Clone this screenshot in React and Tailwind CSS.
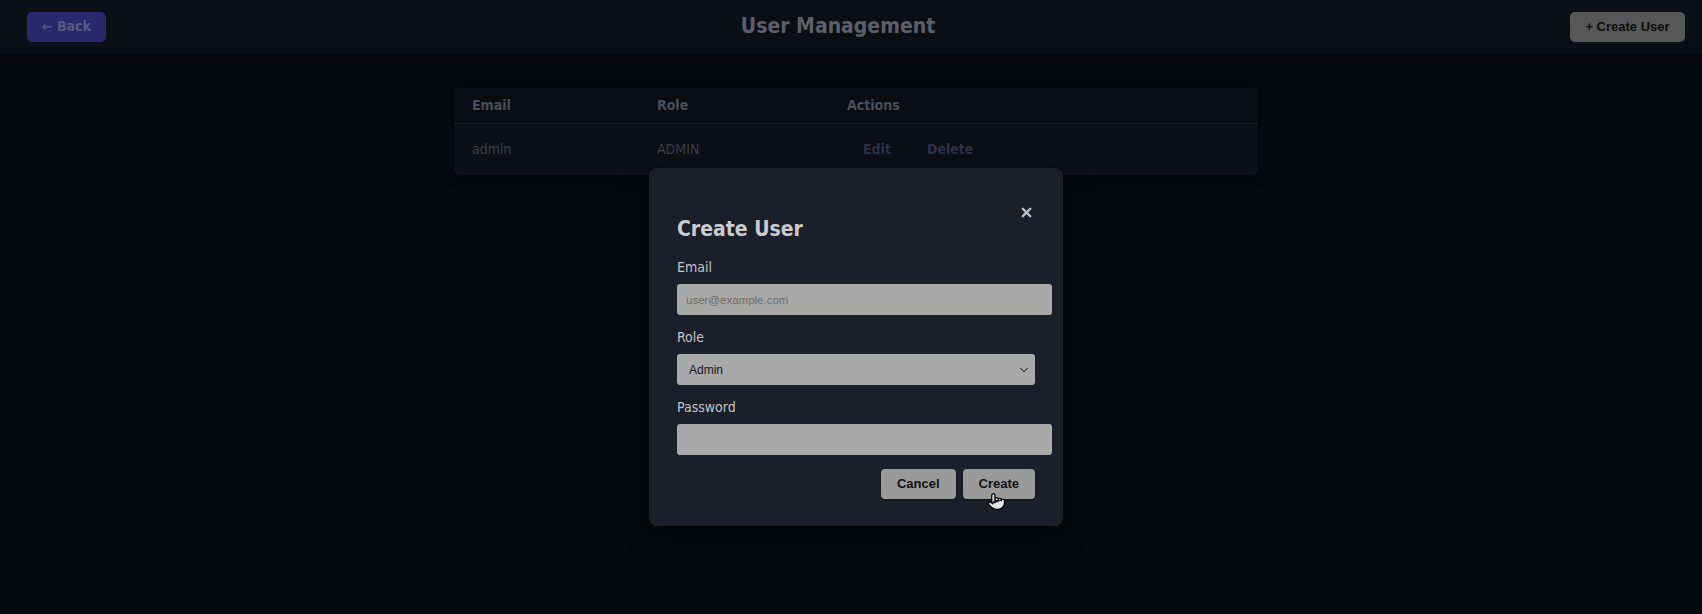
import React, { useState } from "react";
import { X, ChevronDown, Pointer } from "lucide-react";

const users = [{ email: "admin", role: "ADMIN" }];

function CreateUserModal() {
  const [role, setRole] = useState("admin");

  return (
    <div className="absolute inset-0 flex justify-center pl-[10px] pt-[168px]">
      <div className="relative h-[358px] w-[414px] rounded-lg bg-[#1b1f29] px-[28px] pt-[49px] font-['DejaVu_Sans_Condensed','DejaVu_Sans',sans-serif] shadow-[0_4px_24px_rgba(0,0,0,0.5)]">
        <button className="absolute right-[29px] top-[37px] text-[#c2c3c6]">
          <X size={15} strokeWidth={3.6} />
        </button>

        <h2 className="text-[21px] font-bold leading-[24px] text-[#cbccce]">Create User</h2>

        <label className="mt-[18px] block text-[14px] leading-[17px] text-[#c3c4c7]">Email</label>
        <input
          type="email"
          placeholder="user@example.com"
          className="mt-[8px] block h-[31px] w-[375px] rounded-[3px] bg-[#a9a9a9] pl-[9px] font-['Liberation_Sans',Arial,sans-serif] text-[11.5px] text-[#1a1a1a] outline-none placeholder:text-[#6b6b6b]"
        />

        <label className="mt-[14px] block text-[14px] leading-[17px] text-[#c3c4c7]">Role</label>
        <div className="relative mt-[8px]">
          <select
            value={role}
            onChange={(e) => setRole(e.target.value)}
            className="block h-[31px] w-full appearance-none rounded-[3px] bg-[#a9a9a9] pl-[12px] font-['Liberation_Sans',Arial,sans-serif] text-[12px] text-[#161616] outline-none"
          >
            <option value="admin">Admin</option>
            <option value="user">User</option>
          </select>
          <ChevronDown size={14} strokeWidth={1.8} className="pointer-events-none absolute right-[4px] top-[9px] text-[#2a2a2a]" />
        </div>

        <label className="mt-[14px] block text-[14px] leading-[17px] text-[#c3c4c7]">Password</label>
        <input
          type="password"
          className="mt-[8px] block h-[31px] w-[375px] rounded-[3px] bg-[#a9a9a9] pl-[9px] outline-none"
        />

        <div className="mt-[14px] flex justify-end gap-[7px] font-['Liberation_Sans',Arial,sans-serif] text-[13px] font-bold text-[#111]">
          <button className="h-[30px] rounded-[4px] bg-[#9a9a9a] px-[16px] shadow-[0_1px_2px_rgba(0,0,0,0.4)]">Cancel</button>
          <div className="relative">
            <button className="h-[30px] rounded-[4px] bg-[#9a9a9a] px-[16px] shadow-[0_1px_2px_rgba(0,0,0,0.4)]">Create</button>
            {/* mouse pointer from the recording */}
            <Pointer size={19} strokeWidth={1.6} fill="#e6e6e6" className="absolute left-[24px] top-[23px] text-black" />
          </div>
        </div>
      </div>
    </div>
  );
}

export default function App() {
  return (
    <div className="relative min-h-[614px] bg-[#07080b] font-['DejaVu_Sans_Condensed','DejaVu_Sans',sans-serif]">
      {/* Header */}
      <header className="flex h-[54px] items-center justify-between border-b border-[#06070a] bg-[#0b0e15] pl-[27px] pr-[17px]">
        <button className="h-[30px] w-[79px] rounded-[5px] bg-[#29276e] text-[14px] font-bold text-[#575a80]">
          ← Back
        </button>
        <h1 className="text-[21px] font-bold text-[#5c5f67]">User Management</h1>
        <button className="h-[30px] w-[115px] rounded-[5px] bg-[#575757] font-['Liberation_Sans',Arial,sans-serif] text-[13px] font-bold text-[#0d0d0d]">
          + Create User
        </button>
      </header>

      {/* Table */}
      <main className="pl-[10px] pt-[34px]">
        <div className="mx-auto w-[804px] overflow-hidden rounded-md bg-[#0a0c11] shadow-[0_2px_10px_rgba(0,0,0,0.6)]">
          <table className="w-full border-collapse text-left text-[14px]">
            <thead>
              <tr className="h-[35px] border-b border-[#1a1d24] text-[#484e5c]">
                <th className="w-[185px] pl-[18px] font-bold">Email</th>
                <th className="w-[190px] pl-[18px] font-bold">Role</th>
                <th className="pl-[18px] font-bold">Actions</th>
              </tr>
            </thead>
            <tbody>
              {users.map((u) => (
                <tr key={u.email} className="h-[52px] bg-[#0c0f15] text-[#3b404a]">
                  <td className="pl-[18px]">{u.email}</td>
                  <td className="pl-[18px]">{u.role}</td>
                  <td className="pl-[18px]">
                    <div className="flex gap-[4px] font-bold text-[#2c324d]">
                      <button className="px-[16px]">Edit</button>
                      <button className="px-[16px]">Delete</button>
                    </div>
                  </td>
                </tr>
              ))}
            </tbody>
          </table>
        </div>
      </main>

      <CreateUserModal />
    </div>
  );
}
